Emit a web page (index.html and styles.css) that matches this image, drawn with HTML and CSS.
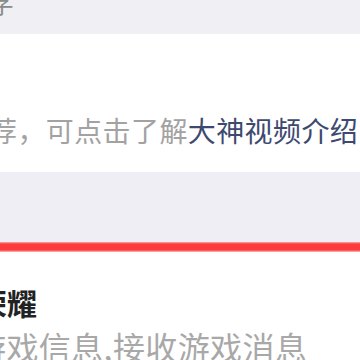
FILE: index.html
```html
<!DOCTYPE html>
<html lang="zh-CN">
<head>
    <meta charset="UTF-8">
    <meta name="viewport" content="width=device-width, initial-scale=1.0">
    <title>大神</title>
    <link rel="stylesheet" href="styles.css">
</head>
<body>
    <div class="page">
        <div class="top-band">
            <p class="top-text">文字</p>
        </div>

        <div class="intro">
            <p class="intro-text">荐，可点击了解<a class="intro-link">大神视频介绍</a></p>
        </div>

        <div class="gap-band"></div>
        <div class="red-line"></div>

        <div class="game">
            <h2 class="game-title">荣耀</h2>
            <p class="game-desc">游戏信息,接收游戏消息</p>
        </div>
    </div>
</body>
</html>
```

FILE: styles.css
```css
* {
    margin: 0;
    padding: 0;
    box-sizing: border-box;
}

body {
    font-family: 'Noto Sans CJK SC', 'Noto Sans', sans-serif;
    background: #ffffff;
    width: 360px;
    height: 360px;
    overflow: hidden;
}

.page {
    width: 360px;
    overflow: hidden;
}

.top-band {
    background: #f0eff4;
    height: 34px;
    overflow: hidden;
}

.top-text {
    font-size: 24px;
    line-height: 24px;
    color: #8a8a8a;
    white-space: nowrap;
    margin-top: -9px;
    margin-left: -34px;
}

.intro {
    background: #ffffff;
    height: 138px;
    padding-top: 82px;
}

.intro-text {
    font-size: 28px;
    line-height: 28px;
    letter-spacing: 0.4px;
    color: #a2a2a2;
    white-space: nowrap;
    margin-left: -11px;
}

.intro-link {
    color: #3e4970;
    text-decoration: none;
}

.gap-band {
    background: #efeef4;
    height: 70px;
}

.red-line {
    height: 10px;
    background: linear-gradient(#f7aaaa 0, #fd3b3d 2px, #fd3b3d 8px, #fbc0c0 10px);
}

.game {
    background: #ffffff;
    padding-top: 35px;
}

.game-title {
    font-size: 30px;
    line-height: 30px;
    font-weight: bold;
    color: #222222;
    white-space: nowrap;
    margin-left: -23px;
}

.game-desc {
    font-size: 32px;
    line-height: 32px;
    letter-spacing: 0.4px;
    color: #a8a8a8;
    white-space: nowrap;
    margin-top: 13px;
    margin-left: -26px;
}
```
